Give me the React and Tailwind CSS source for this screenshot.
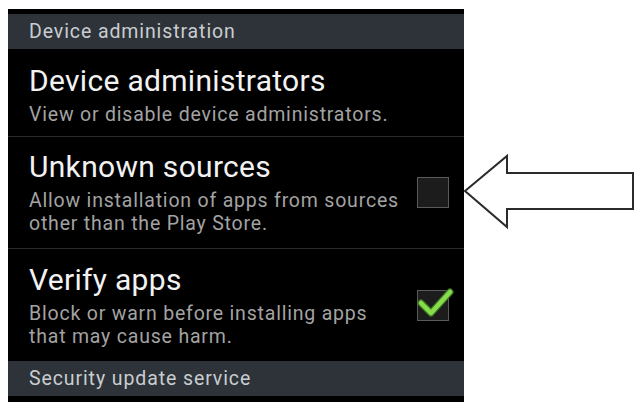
import React from "react";

const rows = [
  {
    title: "Device administrators",
    lines: ["View or disable device administrators."],
  },
  {
    title: "Unknown sources",
    lines: ["Allow installation of apps from sources", "other than the Play Store."],
    checkbox: "off",
  },
  {
    title: "Verify apps",
    lines: ["Block or warn before installing apps", "that may cause harm."],
    checkbox: "on",
  },
];

const SectionHeader = ({ label }) => (
  <div className="h-[35px] bg-[#2d3338] pl-[21px] flex items-center text-[19.5px] tracking-[0.9px] text-[#c9cdd1] leading-none">
    {label}
  </div>
);

const Checkbox = ({ checked }) => (
  <div className="relative w-[32px] h-[31px] border-[1.5px] border-[#5a5a5a] bg-[#1c1c1c] shrink-0">
    {checked && (
      <svg
        className="absolute -left-[2px] -top-[2px] overflow-visible"
        width="36"
        height="34"
        viewBox="0 0 36 34"
      >
        <polyline
          points="5,14 15,24 34,3"
          fill="none"
          stroke="#3f7a22"
          strokeWidth="7"
          strokeLinecap="round"
          strokeLinejoin="round"
        />
        <polyline
          points="5,14 15,24 34,3"
          fill="none"
          stroke="#86dc4a"
          strokeWidth="4.5"
          strokeLinecap="round"
          strokeLinejoin="round"
        />
      </svg>
    )}
  </div>
);

const SettingRow = ({ row, last }) => (
  <div
    className={`flex items-center pl-[21px] pr-[15px] ${
      row.lines.length > 1 ? "h-[112px]" : "h-[88px] pt-[4px]"
    } ${last ? "" : "border-b border-[#2a2a2a]"}`}
  >
    <div className="flex-1 flex flex-col">
      <div className="text-[30px] tracking-[0.3px] leading-[34px] text-[#f2f2f2]">{row.title}</div>
      <div className="mt-[5px] text-[19.5px] tracking-[0.8px] leading-[23px] text-[#a3a3a3]">
        {row.lines.map((line) => (
          <div key={line}>{line}</div>
        ))}
      </div>
    </div>
    {row.checkbox && <Checkbox checked={row.checkbox === "on"} />}
  </div>
);

const App = () => {
  return (
    <div
      className="w-[637px] h-[409px] bg-white flex items-start overflow-hidden"
      style={{ fontFamily: "Roboto, 'Noto Sans', sans-serif" }}
    >
      <div className="ml-[8px] mt-[9px] w-[456px] bg-black pt-[5px] pb-[6px] flex flex-col">
        <SectionHeader label="Device administration" />
        {rows.map((row, i) => (
          <SettingRow key={row.title} row={row} last={i === rows.length - 1} />
        ))}
        <SectionHeader label="Security update service" />
      </div>

      {/* hollow arrow pointing at the Unknown sources checkbox */}
      <svg className="mt-[150px] shrink-0" width="172" height="84" viewBox="0 0 172 84">
        <polygon
          points="1,41 43,6 43,23 169,23 169,59 43,59 43,77"
          fill="white"
          stroke="#2b2b2b"
          strokeWidth="2"
          strokeLinejoin="miter"
        />
      </svg>
    </div>
  );
};

export default App;
